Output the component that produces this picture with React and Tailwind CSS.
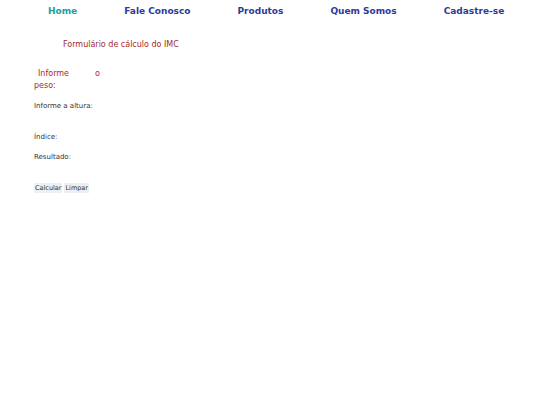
import React from "react";

const links = ["Home", "Fale Conosco", "Produtos", "Quem Somos", "Cadastre-se"];

const App = () => {
  return (
    <div className="w-[540px] h-[405px] bg-white font-['DejaVu_Sans',sans-serif]">
      <ul className="flex gap-[47px] pl-[48px] pt-[5px] text-[9px] leading-[12px]">
        {links.map((item, i) => (
          <li key={item}>
            <a
              href="#"
              className={"font-bold " + (i === 0 ? "text-[#20a0a0]" : "text-[#2e3a9a]")}
            >
              {item}
            </a>
          </li>
        ))}
      </ul>

      <h1 className="mt-[23px] ml-[63px] text-[8px] leading-[10px] text-[#a52a2a]">
        Formulário de cálculo do IMC
      </h1>

      <form className="ml-[34px] mt-[18px] text-[7px] leading-[9px] text-[#333]">
        <p className="w-[66px] text-[8px] leading-[12px] text-[#a52a2a] text-justify indent-1">
          Informe o peso:
        </p>
        <p className="mt-[10px]">Informe a altura:</p>
        <p className="mt-[22px]">Índice:</p>
        <p className="mt-[11px]">Resultado:</p>
        <div className="mt-[21px] flex gap-[2px] text-[6.5px]">
          <button type="button" className="bg-[#efefef] px-[1px] leading-[10px]">
            Calcular
          </button>
          <button type="button" className="bg-[#efefef] px-[1px] leading-[10px]">
            Limpar
          </button>
        </div>
      </form>
    </div>
  );
};

export default App;
